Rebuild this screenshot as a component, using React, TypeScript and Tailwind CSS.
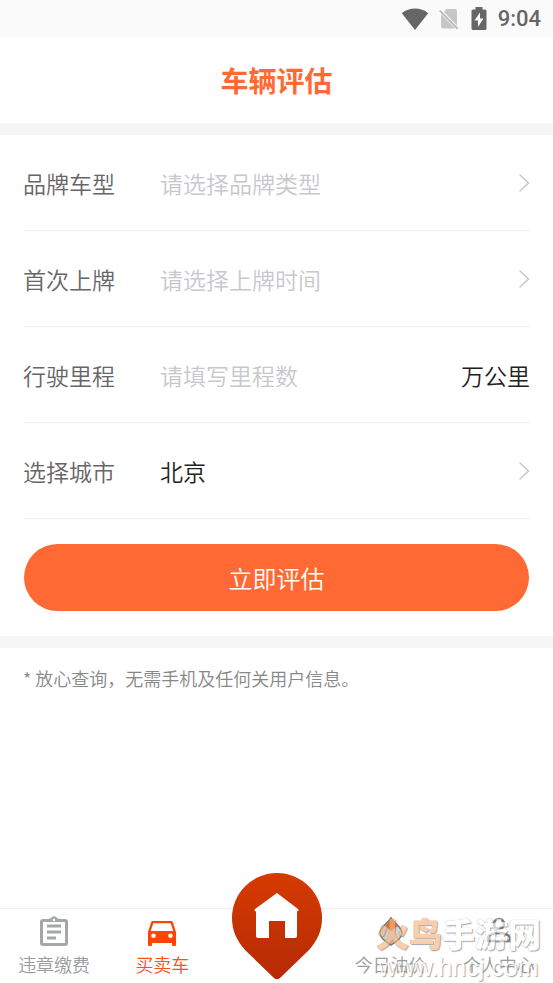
import React from "react";

const sans = "font-['Noto_Sans_CJK_SC',sans-serif]";

function StatusBar() {
  return (
    <div className="flex h-[37px] items-center justify-end bg-[#fafafa] pr-3 font-[Roboto,sans-serif] text-[#666666]">
      <svg className="mr-[10px] h-[22px] w-[28px]" viewBox="0 0 28 22" fill="currentColor" aria-hidden="true">
        <path d="M14 22 0.800 5.200C4.500 2 9 0.500 14 0.500s9.500 1.500 13.200 4.700z" />
      </svg>
      <svg className="mr-3 h-[22px] w-[20px]" viewBox="0 0 20 22" aria-hidden="true">
        <path d="M7.500 1H16a2 2 0 0 1 2 2v14.500L5 4zM2 6v12.500a2 2 0 0 0 2 2h12z" fill="#c6c6c6" />
        <path d="M0.800 2.600 18.600 20.800" stroke="#bbbbbb" strokeWidth="2" />
      </svg>
      <svg className="mr-[11px] h-[23px] w-[16px]" viewBox="0 0 16 23" aria-hidden="true">
        <path d="M4.500 0h7v2.500H14A1.500 1.500 0 0 1 15.500 4v17.500A1.500 1.500 0 0 1 14 23H2A1.500 1.500 0 0 1 .500 21.500V4A1.500 1.500 0 0 1 2 2.500h2.500z" fill="#666" />
        <path d="M9 5.500 3.500 13.500H7V20l5.500-8.500H9z" fill="#fafafa" />
      </svg>
      <span className="text-[22px] leading-6 font-medium">9:04</span>
    </div>
  );
}

function Chevron() {
  return (
    <svg className="h-5 w-3 shrink-0" viewBox="0 0 12 20" fill="none" stroke="#c9c9cc" strokeWidth="1.500" aria-hidden="true">
      <path d="M1.500 1.500 10.500 10 1.500 18.500" />
    </svg>
  );
}

const rowClass = "flex h-24 items-center border-b border-[#f1f1f1] text-[23px] leading-8";
const labelClass = "w-[137px] shrink-0 text-[#666666]";

function PickerRow({ id, label, value, placeholder }: { id: string; label: string; value?: string; placeholder?: string }) {
  return (
    <div className={rowClass}>
      <label htmlFor={id} className={labelClass}>{label}</label>
      <button id={id} type="button" className="flex flex-1 items-center justify-between text-left">
        <span className={value ? "text-[#222222]" : "text-[#c8c8cc]"}>{value ?? placeholder}</span>
        <Chevron />
      </button>
    </div>
  );
}

function Tab({ label, active, children }: { label: string; active?: boolean; children: React.ReactNode }) {
  return (
    <a href="#" className={`flex flex-col items-center gap-1 pt-[7px] text-lg leading-6 whitespace-nowrap ${active ? "text-[#f4511e]" : "text-[#999c9f]"}`}>
      {children}
      <span>{label}</span>
    </a>
  );
}

function ClipboardIcon() {
  return (
    <svg className="h-8 w-8" viewBox="0 0 32 32" fill="none" stroke="#a3a7aa" aria-hidden="true">
      <rect x="3.500" y="4.500" width="25" height="24" rx="1.500" strokeWidth="3" />
      <path d="M11 4.500V3.500L13 3a3.200 3.200 0 0 1 6 0l2 .500v1z" fill="#a3a7aa" strokeWidth="1.500" strokeLinejoin="round" />
      <circle cx="16" cy="4" r="1.300" fill="#fff" stroke="none" />
      <path d="M9 10h14M9 16h14M9 22h9" strokeWidth="2.800" />
    </svg>
  );
}

function CarIcon() {
  return (
    <svg className="h-8 w-8" viewBox="0 0 32 32" fill="#ff4500" fillRule="evenodd" aria-hidden="true">
      <path d="M7 5h18c1 0 1.700.600 2 1.500L30 16v13a1 1 0 0 1-1 1h-2a1 1 0 0 1-1-1v-2H6v2a1 1 0 0 1-1 1H3a1 1 0 0 1-1-1V16L5 6.500C5.300 5.600 6 5 7 5zM7.300 7.200 4.700 15h22.600l-2.600-7.800zM7.500 17.500a2.300 2.300 0 1 0 0 4.600 2.300 2.300 0 0 0 0-4.600zM24.500 17.500a2.300 2.300 0 1 0 0 4.600 2.300 2.300 0 0 0 0-4.600z" />
    </svg>
  );
}

function OilIcon() {
  return (
    <svg className="h-8 w-8" viewBox="0 0 32 32" aria-hidden="true">
      <path d="M16 2c3 5 11 9 11 15 0 5-5 8-11 12C10 25 5 22 5 17 5 11 13 7 16 2z" fill="#d8d6d3" stroke="#77797b" strokeWidth="1.500" />
      <path d="M16 2c2 3 5 6 7 8l-7 5-6-5c2-2 5-5 6-8z" fill="#d9702f" />
    </svg>
  );
}

function PersonIcon() {
  return (
    <svg className="h-8 w-8" viewBox="0 0 32 32" fill="none" stroke="#77797b" strokeWidth="2.500" aria-hidden="true">
      <circle cx="16" cy="8" r="5" />
      <path d="M5 25v-3c0-3 6-5 11-5s11 2 11 5v3z" />
    </svg>
  );
}

function HomePin() {
  return (
    <svg className="h-[108px] w-[92px]" viewBox="0 0 92 108" aria-hidden="true">
      <defs>
        <linearGradient id="pin" x1="0" y1="0" x2="0" y2="1">
          <stop offset="0" stopColor="#d53b00" />
          <stop offset="1" stopColor="#b52a06" />
        </linearGradient>
      </defs>
      <path d="M46 1a45 45 0 0 1 45 45c0 13-5 23-13 32L49 106q-3 2.500-6 0L14 78C6 69 1 59 1 46A45 45 0 0 1 46 1z" fill="url(#pin)" />
      <path d="M46 21 67 37q1.500 2-1 2.500V64q0 2-2 2H54V49H38v17H27q-2 0-2-2V39.500q-2.500-.500-1-2.500z" fill="#fff" />
    </svg>
  );
}

function Watermark() {
  return (
    <div className="pointer-events-none absolute right-3 bottom-0 text-center whitespace-nowrap opacity-65">
      <div className="text-[33px] leading-9 font-black text-white [text-shadow:1px_1px_1px_#777777,0_0_1px_#999999]">
        <span className="text-[#fcb27c]">火鸟</span>手游网
      </div>
      <div className="font-['Liberation_Sans',sans-serif] text-[25px] leading-8 text-white [text-shadow:1px_1px_1px_#777777]">www.hncj.com</div>
    </div>
  );
}

export default function App() {
  return (
    <div className={`flex min-h-screen flex-col bg-white font-[350] ${sans}`}>
      <StatusBar />
      <header className="flex h-[86px] items-center justify-center">
        <h1 className="text-[28px] leading-10 font-bold text-[#ff6933]">车辆评估</h1>
      </header>
      <main className="flex-1 border-t-12 border-[#f6f6f6]">
        <form className="border-b-12 border-[#f6f6f6] px-[23px] pb-[25px]">
          <PickerRow id="model" label="品牌车型" placeholder="请选择品牌类型" />
          <PickerRow id="date" label="首次上牌" placeholder="请选择上牌时间" />
          <div className={rowClass}>
            <label htmlFor="mileage" className={labelClass}>行驶里程</label>
            <input id="mileage" type="text" placeholder="请填写里程数" className="min-w-0 flex-1 text-[#222222] outline-none placeholder:text-[#c8c8cc]" />
            <span className="text-[#222222]">万公里</span>
          </div>
          <PickerRow id="city" label="选择城市" value="北京" />
          <div className="px-px pt-[25px]">
            <button type="button" className="h-[67px] w-full rounded-full bg-[#ff6933] text-2xl text-white">立即评估</button>
          </div>
        </form>
        <p className="px-[23px] pt-4 text-lg leading-7 text-[#888888]">* 放心查询，无需手机及任何关用户信息。</p>
      </main>
      <nav className="relative grid h-[75px] grid-cols-[1fr_1fr_120px_1fr_1fr] border-t border-[#f1f1f1]">
        <Tab label="违章缴费"><ClipboardIcon /></Tab>
        <Tab label="买卖车" active><CarIcon /></Tab>
        <a href="#" aria-label="首页" className="-mt-[37px] flex justify-center"><HomePin /></a>
        <Tab label="今日油价"><OilIcon /></Tab>
        <Tab label="个人中心"><PersonIcon /></Tab>
        <Watermark />
      </nav>
    </div>
  );
}
